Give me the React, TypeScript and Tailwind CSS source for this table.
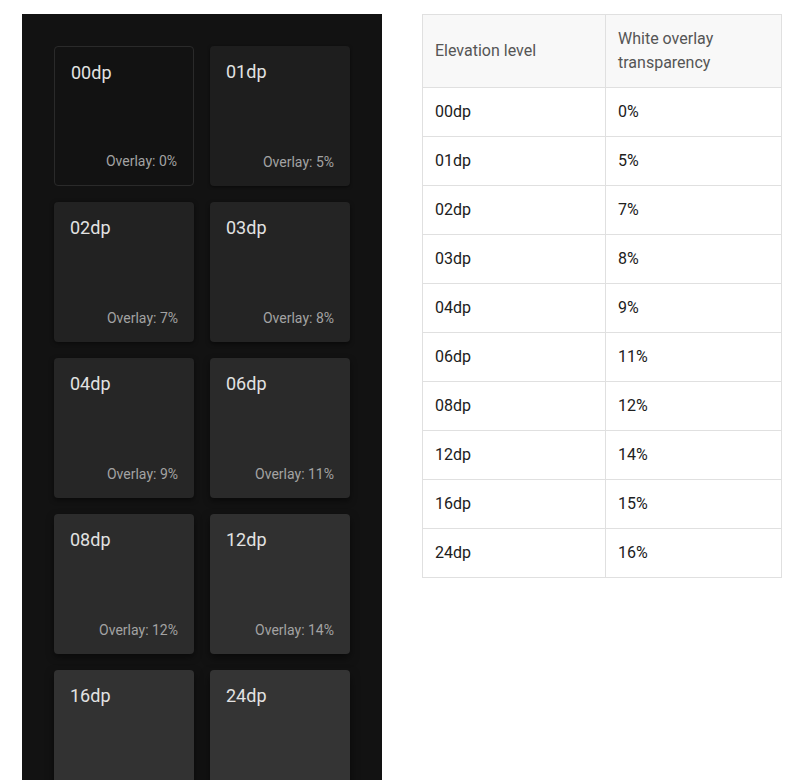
import React from 'react';

type Level = { dp: string; overlay: string; bg: string; shadow: string };

const LEVELS: Level[] = [
  { dp: '00dp', overlay: '0%', bg: 'bg-[#121212] border border-[#2a2a2a]', shadow: '' },
  { dp: '01dp', overlay: '5%', bg: 'bg-[#1e1e1e]', shadow: 'shadow-[0_1px_3px_rgba(0,0,0,0.5)]' },
  { dp: '02dp', overlay: '7%', bg: 'bg-[#222222]', shadow: 'shadow-[0_1px_4px_rgba(0,0,0,0.5)]' },
  { dp: '03dp', overlay: '8%', bg: 'bg-[#242424]', shadow: 'shadow-[0_2px_4px_rgba(0,0,0,0.5)]' },
  { dp: '04dp', overlay: '9%', bg: 'bg-[#262626]', shadow: 'shadow-[0_2px_5px_rgba(0,0,0,0.5)]' },
  { dp: '06dp', overlay: '11%', bg: 'bg-[#2a2a2a]', shadow: 'shadow-[0_3px_6px_rgba(0,0,0,0.5)]' },
  { dp: '08dp', overlay: '12%', bg: 'bg-[#2c2c2c]', shadow: 'shadow-[0_3px_7px_rgba(0,0,0,0.5)]' },
  { dp: '12dp', overlay: '14%', bg: 'bg-[#303030]', shadow: 'shadow-[0_4px_8px_rgba(0,0,0,0.5)]' },
  { dp: '16dp', overlay: '15%', bg: 'bg-[#323232]', shadow: 'shadow-[0_4px_9px_rgba(0,0,0,0.5)]' },
  { dp: '24dp', overlay: '16%', bg: 'bg-[#343434]', shadow: 'shadow-[0_5px_10px_rgba(0,0,0,0.5)]' },
];

const ElevationCard: React.FC<{ level: Level }> = ({ level }) => (
  <div className={`h-[140px] rounded flex flex-col justify-between p-4 ${level.bg} ${level.shadow}`}>
    <span className="text-[18px] leading-[20px] text-[#e2e2e2]">{level.dp}</span>
    <span className="self-end text-[14px] leading-4 text-[#a3a3a3]">Overlay: {level.overlay}</span>
  </div>
);

const App: React.FC = () => {
  return (
    <div className="min-h-screen bg-white flex items-start gap-10 pl-[22px] pt-[14px] font-['Roboto',sans-serif]">
      <div className="w-[360px] bg-[#121212] px-8 pt-8 pb-8 grid grid-cols-2 gap-4">
        {LEVELS.map(l => (
          <ElevationCard key={l.dp} level={l} />
        ))}
      </div>

      <table className="w-[360px] border-collapse border border-[#e0e0e0] text-[16px] leading-6">
        <thead>
          <tr className="bg-[#f8f8f8]">
            <th className="w-[183px] border border-[#e0e0e0] px-3 py-3 text-left font-normal text-[#555555]">Elevation level</th>
            <th className="border border-[#e0e0e0] px-3 py-3 text-left font-normal text-[#555555]">White overlay transparency</th>
          </tr>
        </thead>
        <tbody>
          {LEVELS.map(l => (
            <tr key={l.dp}>
              <td className="border border-[#e0e0e0] px-3 py-3 text-[#202020]">{l.dp}</td>
              <td className="border border-[#e0e0e0] px-3 py-3 text-[#202020]">{l.overlay}</td>
            </tr>
          ))}
        </tbody>
      </table>
    </div>
  );
};

export default App;
